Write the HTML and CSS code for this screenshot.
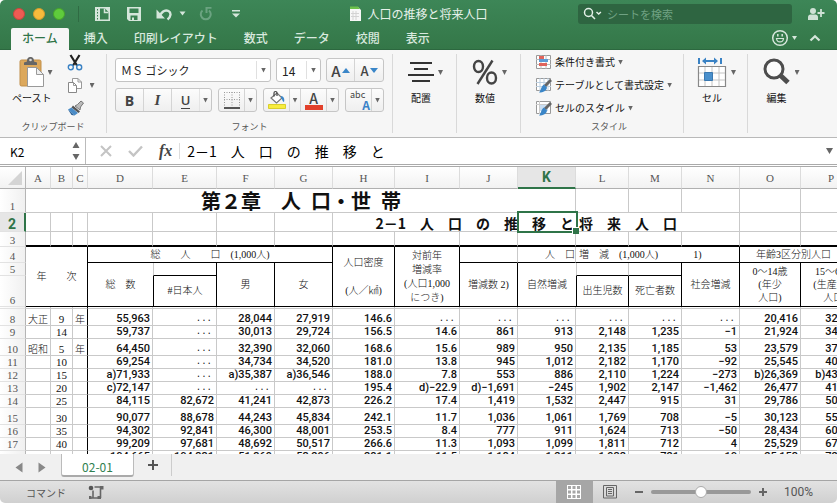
FILE: index.html
```html
<!DOCTYPE html>
<html lang="ja">
  <head>
    <meta charset="UTF-8" />
    <meta name="viewport" content="width=device-width, initial-scale=1.0" />
    <title>人口の推移と将来人口</title>
    <link rel="stylesheet" href="styles.css">
  </head>
  <body>
    <div class="window">
      <header class="top">
        <div class="titlebar">
          <div class="quick">
            <button class="light red" aria-label="閉じる"></button>
            <button class="light yellow" aria-label="しまう"></button>
            <button class="light green" aria-label="拡大"></button>
            <span class="quick-line"></span>
            <button class="q-btn q-book" aria-label="テンプレート">
              <svg width="17" height="16" viewBox="0 0 17 16"><path fill="#d5e6db" fill-rule="evenodd" d="M1 1h15v14H1zM6 2.500v11h8.500V6L11 2.500z"/><path d="M10.500 2.500V6.500H14.500" fill="none" stroke="#d5e6db" stroke-width="1.500"/><path d="M3.500 3v11" stroke="#3a7f52" stroke-dasharray="1.500 1.500"/></svg>
            </button>
            <button class="q-btn q-save" aria-label="保存">
              <svg width="16" height="16" viewBox="0 0 16 16"><path fill="#d5e6db" fill-rule="evenodd" d="M1 1h14v14H3L1 13zM3.500 2.500v4.500h9V2.500zM4.500 9.500V14h1.500v-2.500h2V14h3.500V9.500z"/></svg>
            </button>
            <button class="q-btn q-undo" aria-label="元に戻す">
              <svg width="16" height="16" viewBox="0 0 16 16"><path d="M3.500 10C6 5.500 9.500 3.500 12.500 5c3 1.700 2.500 6-1 8.500" fill="none" stroke="#d5e6db" stroke-width="2.400"/><path fill="#d5e6db" d="M0.500 3.500v9h8.500z"/></svg>
            </button>
            <svg class="q-caret" width="7" height="5" viewBox="0 0 7 5"><path fill="#d5e6db" d="M0.500 0.500h6L3.500 4.500z"/></svg>
            <button class="q-btn q-redo" aria-label="やり直し">
              <svg width="15" height="16" viewBox="0 0 15 16"><path d="M4.500 4.500a5 5 0 1 0 6.500 0" fill="none" stroke="#6ba381" stroke-width="2"/><path fill="#6ba381" d="M7.500 1h6v1.800h-4V7H7.500z"/></svg>
            </button>
            <button class="q-btn q-more" aria-label="カスタマイズ">
              <svg width="10" height="10" viewBox="0 0 10 10"><path fill="#d5e6db" d="M1 1h8v1.500H1zM1 4.500h8L5 8.500z"/></svg>
            </button>
          </div>
          <div class="doc-title">
            <svg width="13" height="16" viewBox="0 0 13 16"><path fill="#f7f7f7" d="M1 1h8l3 3v11H1z"/><path fill="#6cc24a" d="M1 0.500h8l2 2.500H1z"/><path d="M4 5v9M7 5v9M2 7.500h8M2 10.500h8" stroke="#d3d3d3"/></svg>
            <span>人口の推移と将来人口</span>
          </div>
          <div class="title-right">
            <label class="search">
              <svg width="19" height="13" viewBox="0 0 19 13"><circle cx="5.500" cy="5.500" r="4" fill="none" stroke="#e4f0e8" stroke-width="1.500"/><path d="M8.500 8.500l3.500 3.500M13.500 5l2.200 2 2.200-2" fill="none" stroke="#e4f0e8" stroke-width="1.500"/></svg>
              <input type="search" placeholder="シートを検索" aria-label="シートを検索" />
            </label>
            <button class="share" aria-label="共有">
              <svg width="18" height="14" viewBox="0 0 18 14"><circle cx="6" cy="4" r="3" fill="#cfe2d6"/><path fill="#cfe2d6" d="M1 13V10c0-2 2-2.500 3-2.500h4c1 0 3 .5 3 2.500v3z"/><path d="M14 2v8M10.500 6h7" stroke="#cfe2d6" stroke-width="1.800"/></svg>
            </button>
          </div>
        </div>
        <div class="tab-row">
          <nav class="tabs">
            <a class="tab active" href="#">ホーム</a>
            <a class="tab" href="#">挿入</a>
            <a class="tab" href="#">印刷レイアウト</a>
            <a class="tab" href="#">数式</a>
            <a class="tab" href="#">データ</a>
            <a class="tab" href="#">校閲</a>
            <a class="tab" href="#">表示</a>
          </nav>
          <div class="tab-tools">
            <button class="smile" aria-label="フィードバック">
              <svg width="27" height="18" viewBox="0 0 27 18"><circle cx="9" cy="9" r="7.300" fill="none" stroke="#d5e6db" stroke-width="1.500"/><path d="M5.500 9.500c.5 4.500 6.500 4.500 7 0z" fill="none" stroke="#d5e6db" stroke-width="1.200"/><path d="M6.800 5v2.500M11.200 5v2.500" stroke="#d5e6db" stroke-width="1.500"/><path fill="#d5e6db" d="M21 7h5l-2.500 4z"/></svg>
            </button>
            <button class="fold" aria-label="リボンを閉じる">
              <svg width="12" height="8" viewBox="0 0 12 8"><path d="M1.500 6.500L6 2.200l4.500 4.300" fill="none" stroke="#d5e6db" stroke-width="2.200"/></svg>
            </button>
          </div>
        </div>
      </header>

      <section class="ribbon">
        <div class="group clipboard">
          <div class="group-body">
            <button class="big">
              <svg width="26" height="32" viewBox="0 0 26 32"><rect x="1" y="4" width="21" height="26" rx="1.500" fill="#dca85c" stroke="#c18f49"/><path fill="#666" d="M5 9V6.500L8 5.500C8 2 9.500 1 11.500 1S15 2 15 5.500l3 1V9z"/><circle cx="11.500" cy="4" r="1.300" fill="#ddd"/><path fill="#fff" stroke="#999" d="M8.500 11.500h9l7 7v12h-16z"/><path fill="#eee" stroke="#999" d="M17.500 11.500v7h7z"/></svg>
              <span>ペースト</span>
            </button>
            <i class="caret"></i>
            <div class="clip-side">
              <button aria-label="カット">
                <svg width="16" height="17" viewBox="0 0 16 17"><path d="M3.500 1L10 11.500M12.500 1L6 11.500" stroke="#222" stroke-width="2.200"/><circle cx="3.800" cy="13.300" r="2.500" fill="none" stroke="#3a82c4" stroke-width="1.400"/><circle cx="12.200" cy="13.300" r="2.500" fill="none" stroke="#3a82c4" stroke-width="1.400"/></svg>
              </button>
              <button aria-label="コピー">
                <svg width="16" height="17" viewBox="0 0 16 17"><path fill="#fff" stroke="#999" d="M5.500 1.500H11L14.500 5v6.500h-9z"/><path fill="#fff" stroke="#888" d="M1.500 5.500h5L9.500 8.500v7h-8z"/><path d="M6.500 5.500v3h3M11 1.500V5h3.500" fill="none" stroke="#999"/></svg>
                <i class="caret"></i>
              </button>
              <button aria-label="書式のコピー">
                <svg width="18" height="16" viewBox="0 0 18 16"><path fill="#bbb" stroke="#777" d="M8 6l2.500-1.500L14 1l2.500 2-3 4-.5 3z"/><path fill="#555" d="M6 5.500l7 6-1.500 1.500-7-5.500z"/><path fill="#4a8cc7" d="M4.500 7.500l6.500 5.500-3.500 2.500L1 9.500z"/><path fill="#2b6299" d="M1 9.500l6.500 6-3-.5z"/></svg>
              </button>
            </div>
          </div>
          <div class="caption">クリップボード</div>
        </div>

        <div class="group font">
          <div class="font-rows">
            <div class="font-row">
              <div class="combo combo-name">
                <select aria-label="フォント名"><option>ＭＳ ゴシック</option></select>
                <i class="caret"></i>
              </div>
              <div class="combo combo-size">
                <select aria-label="フォントサイズ"><option>14</option></select>
                <i class="caret"></i>
              </div>
              <div class="btns">
                <button class="grow" aria-label="拡大">A<svg width="8" height="5" viewBox="0 0 8 5"><path fill="#3a86c8" d="M0 5h8L4 0z"/></svg></button>
                <button class="shrink" aria-label="縮小">A<svg width="8" height="5" viewBox="0 0 8 5"><path fill="#3a86c8" d="M0 0h8L4 5z"/></svg></button>
              </div>
            </div>
            <div class="font-row">
              <div class="btns">
                <button class="bold">B</button>
                <button class="italic">I</button>
                <button class="under"><span>U</span></button>
                <button class="drop" aria-label="下線の種類"><i class="caret"></i></button>
              </div>
              <div class="btns">
                <button class="tool" aria-label="罫線">
                  <svg width="18" height="18" viewBox="0 0 18 18"><path d="M1.500 1v15M9 1v15M16.500 1v15M1 1.500h16M1 8.500h16" stroke="#999" stroke-dasharray="1 1.500"/><path d="M1 17h16" stroke="#222" stroke-width="1.500"/></svg>
                </button>
                <button class="drop" aria-label="罫線の種類"><i class="caret"></i></button>
              </div>
              <div class="btns">
                <button class="tool" aria-label="塗りつぶし">
                  <svg width="20" height="20" viewBox="0 0 20 20"><path fill="#fff" stroke="#777" stroke-width="1.200" d="M4 8l6-5 5 5-5.500 5z"/><path d="M7 6.500V3c0-2 3-2 3 0v3" fill="none" stroke="#444" stroke-width="1.200"/><path fill="#3a86c8" d="M14 6c2.500 0 4 3 3 6-1.500 0-1.500-3-3-4z"/><path fill="#f7ec3e" stroke="#d9cf2c" d="M1.500 14.500h17v4h-17z"/></svg>
                </button>
                <button class="drop" aria-label="塗りつぶしの色"><i class="caret"></i></button>
                <button class="tool color-a" aria-label="フォントの色">A<span class="red-bar"></span></button>
                <button class="drop" aria-label="文字の色"><i class="caret"></i></button>
              </div>
              <div class="btns">
                <button class="tool phonetic"><span>abc</span><b>A</b></button>
                <button class="drop" aria-label="ふりがな"><i class="caret"></i></button>
              </div>
            </div>
          </div>
          <div class="caption">フォント</div>
        </div>

        <div class="group single">
          <button class="big">
            <svg width="26" height="32" viewBox="0 0 26 32"><path d="M2 7h22M6 13h14M0 19h26M4 25h18" stroke="#333" stroke-width="2"/></svg>
            <span>配置</span>
          </button>
          <i class="caret"></i>
        </div>
        <div class="group single">
          <button class="big">
            <svg width="26" height="32" viewBox="0 0 26 32"><ellipse cx="6.500" cy="10.500" rx="4.500" ry="5.500" fill="none" stroke="#444" stroke-width="2.400"/><ellipse cx="19.500" cy="22" rx="4.500" ry="5.500" fill="none" stroke="#444" stroke-width="2.400"/><path d="M20.500 4.500L5.500 28" stroke="#444" stroke-width="2.400"/></svg>
            <span>数値</span>
          </button>
          <i class="caret"></i>
        </div>

        <div class="group styles">
          <div class="style-list">
            <button>
              <svg width="17" height="16" viewBox="0 0 17 16"><path fill="#fff" stroke="#999" d="M1.500 1.500h14v13h-14z"/><path d="M1 5.500h15M1 10.500h15M6 1v14M11 1v14" stroke="#bbb"/><path fill="#e0645c" d="M4 2h5v3H4zM4 9h8v3H4z"/><path fill="#5b9bd5" d="M4 5h9v3H4z"/></svg>
              条件付き書式<i class="caret"></i>
            </button>
            <button>
              <svg width="17" height="16" viewBox="0 0 17 16"><path fill="#fff" stroke="#999" d="M1.500 1.500h14v12h-14z"/><path d="M1 5.500h15M1 9.500h15M5 1v13M9 1v13M13 1v13" stroke="#bcd0e2"/><path d="M16 3l-6 6" stroke="#666" stroke-width="3"/><path fill="#3a86c8" d="M9 7.500l3 3c-.5 3.500-3.500 5-8 5C6 14 6 9 9 7.500z"/></svg>
              テーブルとして書式設定<i class="caret"></i>
            </button>
            <button>
              <svg width="17" height="16" viewBox="0 0 17 16"><path fill="#fff" stroke="#999" d="M1.500 1.500h14v12h-14z"/><path d="M1 4.500h15M4.500 1v13" stroke="#ccc"/><path fill="#c9def2" d="M5 5h8v6H5z"/><path d="M16 3l-6 6" stroke="#666" stroke-width="3"/><path fill="#3a86c8" d="M9 7.500l3 3c-.5 3.500-3.500 5-8 5C6 14 6 9 9 7.500z"/></svg>
              セルのスタイル<i class="caret"></i>
            </button>
          </div>
          <div class="caption">スタイル</div>
        </div>

        <div class="group single">
          <button class="big">
            <svg width="30" height="32" viewBox="0 0 30 32"><path fill="#fff" stroke="#888" stroke-width="1.200" d="M1.500 10.500h27v20h-27z"/><path d="M2 17h26M2 24h26M8 11v19M15 11v19M22 11v19" stroke="#c4c4c4"/><path fill="#4a90cc" stroke="#3a78b0" d="M7.500 16.500h8v8h-8z"/><path fill="#3a82c4" d="M1 2h2v6H1zM23 2h2v6h-2zM5 5l4-3.500v2.500h8V1.500L21 5l-4 3.500V6H9v2.500z"/></svg>
            <span>セル</span>
          </button>
          <i class="caret"></i>
        </div>
        <div class="group single last">
          <button class="big">
            <svg width="28" height="32" viewBox="0 0 28 32"><circle cx="11" cy="13" r="9" fill="#fbfbfb" stroke="#4d4d4d" stroke-width="3"/><path d="M17.500 19.500l7.500 7" stroke="#4d4d4d" stroke-width="5"/></svg>
            <span>編集</span>
          </button>
          <i class="caret"></i>
        </div>
      </section>

      <section class="formula-bar">
        <div class="name-box">
          <input type="text" value="K2" aria-label="名前ボックス" />
          <svg width="8" height="20" viewBox="0 0 8 20"><path fill="#666" d="M0.500 7h7L4 1zM0.500 13h7L4 19z"/></svg>
        </div>
        <div class="formula-tools">
          <button aria-label="キャンセル"><svg width="12" height="12" viewBox="0 0 12 12"><path d="M1 1l10 10M11 1L1 11" stroke="#c4c4c4" stroke-width="2"/></svg></button>
          <button aria-label="入力"><svg width="15" height="12" viewBox="0 0 15 12"><path d="M1 6l4.500 4.500L14 1.500" fill="none" stroke="#c4c4c4" stroke-width="2.400"/></svg></button>
          <button class="fx">fx</button>
        </div>
        <input class="formula" type="text" value="2－1　人　口　の　推　移　と" aria-label="数式バー" />
        <i class="caret"></i>
      </section>

      <main class="sheet">
        <table>
          <colgroup>
            <col class="w-head"><col class="w-a"><col class="w-b"><col class="w-c"><col class="w-d"><col class="w-e">
            <col class="w-m"><col class="w-m"><col class="w-h"><col class="w-d"><col class="w-m"><col class="w-m">
            <col class="w-s"><col class="w-s"><col class="w-m"><col class="w-o"><col class="w-o">
          </colgroup>
          <thead>
            <tr class="letters">
              <th class="corner"><svg width="16" height="16" viewBox="0 0 16 16"><path fill="#d4d4d4" d="M15 1v14H1z"/></svg></th>
              <th>A</th><th>B</th><th>C</th><th>D</th><th>E</th><th>F</th><th>G</th><th>H</th><th>I</th><th>J</th>
              <th class="sel">K</th><th>L</th><th>M</th><th>N</th><th>O</th><th>P</th>
            </tr>
          </thead>
          <tbody>
            <tr class="row-1">
              <th>1</th>
              <td class="chapter" colspan="11">第２章　人&ensp;口・世&ensp;帯</td>
              <td></td><td></td><td></td><td></td><td></td>
            </tr>
            <tr class="row-2">
              <th class="sel">2</th>
              <td></td><td></td><td></td><td></td><td></td><td></td><td></td>
              <td class="section-left" colspan="4">2－1　人　口　の　推　移　と<span class="selection"></span></td>
              <td class="section-right" colspan="3">将　来　人　口</td>
              <td></td><td></td>
            </tr>
            <tr class="row-3">
              <th>3</th>
              <td></td><td></td><td></td><td></td><td></td><td></td><td></td><td></td><td></td><td></td><td></td><td></td><td></td><td></td><td></td><td></td>
            </tr>
            <tr class="row-4 labels">
              <th>4</th>
              <td class="kr kb" colspan="3" rowspan="3">年　　次</td>
              <td class="kr kb" colspan="4">総　　人　　口　(1,000人)</td>
              <td class="kr kb" rowspan="3">人口密度<br><br>(人／㎢)</td>
              <td class="kr kb" rowspan="3">対前年<br>増減率<br>(人口1,000<br>につき)</td>
              <td class="kb"></td>
              <td class="kb right">人　口</td>
              <td class="kr kb left" colspan="3">増　減　(1,000人)　　　&ensp;1)</td>
              <td class="kb ages" colspan="2">年齢3区分別人口</td>
            </tr>
            <tr class="row-5 labels">
              <th>5</th>
              <td class="kb no-r" rowspan="2">総　数</td>
              <td class="kr kb gl"></td>
              <td class="kr kb" rowspan="2">男</td>
              <td class="kr kb" rowspan="2">女</td>
              <td class="kr kb" rowspan="2">増減数 2)</td>
              <td class="kb no-r" rowspan="2">自然増減</td>
              <td class="kb gl"></td>
              <td class="kr kb"></td>
              <td class="kr kb" rowspan="2">社会増減</td>
              <td class="kr kb" rowspan="2">0～14歳<br>(年少　<br>人口)</td>
              <td class="kr kb working" rowspan="2">15～64歳<br>(生産年齢<br>人口)</td>
            </tr>
            <tr class="row-6 labels">
              <th>6</th>
              <td class="kr kb kl">#日本人</td>
              <td class="kr kb kl">出生児数</td>
              <td class="kr kb">死亡者数</td>
            </tr>
            <tr class="row-7">
              <th></th>
              <td></td><td></td><td class="kr"></td><td></td><td></td><td></td><td></td><td></td><td></td><td></td><td></td><td></td><td></td><td></td><td></td><td></td>
            </tr>
          </tbody>
          <tbody id="dataRows"></tbody>
        </table>
      </main>

      <footer>
        <div class="sheet-tabs">
          <button class="prev" aria-label="前のシート"><svg width="8" height="11" viewBox="0 0 8 11"><path fill="#888" d="M7.500 0.500v10L0.500 5.500z"/></svg></button>
          <button class="next" aria-label="次のシート"><svg width="8" height="11" viewBox="0 0 8 11"><path fill="#888" d="M0.500 0.500v10L7.500 5.500z"/></svg></button>
          <a class="sheet-tab" href="#">02-01</a>
          <button class="add" aria-label="シートを追加"><svg width="12" height="12" viewBox="0 0 12 12"><path d="M6 1v10M1 6h10" stroke="#555" stroke-width="2"/></svg></button>
        </div>
        <div class="status">
          <span class="mode">コマンド</span>
          <button class="macro" aria-label="マクロの記録">
            <svg width="17" height="15" viewBox="0 0 17 15"><circle cx="3" cy="3" r="2.300" fill="#555"/><path d="M6.500 2H15M5 5.500V12.500M1 13h10.500M12.500 2v11" fill="none" stroke="#666" stroke-width="1.600"/><path fill="#666" d="M12 1h3.500v3.500H12zM1 11h2.500v3H1zM9.500 11H13v3H9.500z"/></svg>
          </button>
          <div class="status-right">
            <button class="view on" aria-label="標準">
              <svg width="14" height="14" viewBox="0 0 14 14"><path fill="#fff" d="M0 0h14v14H0z"/><path fill="#a6a6a6" d="M1 1h3v3H1zM5.500 1h3v3h-3zM10 1h3v3h-3zM1 5.500h3v3H1zM5.500 5.500h3v3h-3zM10 5.500h3v3h-3zM1 10h3v3H1zM5.500 10h3v3h-3zM10 10h3v3h-3z"/></svg>
            </button>
            <button class="view" aria-label="ページレイアウト">
              <svg width="14" height="14" viewBox="0 0 14 14"><path fill="none" stroke="#666" d="M.5.5h13v12.500H.5zM3.500 2.500h7v8.500h-7z"/><path d="M5 4.500h4M5 6.500h4M5 8.500h4" stroke="#666"/></svg>
            </button>
            <button class="zoom-btn" aria-label="縮小"><svg width="10" height="10" viewBox="0 0 10 10"><path d="M1 5h8" stroke="#666" stroke-width="2"/></svg></button>
            <input class="zoom" type="range" min="0" max="200" value="100" aria-label="ズーム" />
            <button class="zoom-btn" aria-label="拡大"><svg width="10" height="10" viewBox="0 0 10 10"><path d="M1 5h8M5 1v8" stroke="#666" stroke-width="2"/></svg></button>
            <span class="percent">100%</span>
          </div>
        </div>
      </footer>
    </div>
    <script src="script.js"></script>
  </body>
</html>
```

FILE: styles.css
```css
* {
  box-sizing: border-box;
}
body {
  margin: 0;
  background: #fff;
  font-family: "Noto Sans CJK JP", sans-serif;
  font-size: 10px;
  color: #111;
}
button {
  font-family: inherit;
  font-size: inherit;
  color: inherit;
  background: none;
  border: none;
  padding: 0;
}
input,
select {
  font-family: inherit;
  border: none;
  outline: none;
  background: none;
  padding: 0;
  margin: 0;
}
svg {
  display: block;
  flex: none;
}
.window {
  display: flex;
  flex-direction: column;
  height: 100vh;
  overflow: hidden;
  border-radius: 5px;
}
.caret {
  flex: none;
  width: 5px;
  height: 5px;
  background: #666;
  clip-path: polygon(0 0, 100% 0, 50% 100%);
}

/* title bar */
.top {
  background: linear-gradient(#3d8657, #347748);
  border-bottom: 1px solid #2c683f;
}
.titlebar {
  display: grid;
  grid-template-columns: 1fr auto 1fr;
  height: 27px;
  align-items: center;
}
.quick {
  display: flex;
  align-items: center;
  padding-left: 13px;
}
.light {
  width: 12px;
  height: 12px;
  border-radius: 50%;
  margin-right: 8px;
}
.light.red {
  background: #ee5b53;
  border: 1px solid #c9453d;
}
.light.yellow {
  background: #f7bb3c;
  border: 1px solid #d49b2c;
}
.light.green {
  background: #5fcb3c;
  border: 1px solid #47a42b;
}
.quick-line {
  width: 1px;
  height: 16px;
  margin-left: 5px;
  background: #2f6b43;
}
.q-book {
  margin-left: 15px;
}
.q-save {
  margin-left: 15px;
}
.q-undo {
  margin-left: 14px;
}
.q-caret {
  margin-left: 7px;
}
.q-redo {
  margin-left: 12px;
}
.q-more {
  margin-left: 18px;
}
.doc-title {
  display: flex;
  align-items: center;
  gap: 5px;
  font-size: 12px;
  color: #e6f1ea;
}
.title-right {
  display: flex;
  align-items: center;
  justify-content: flex-end;
  padding-right: 12px;
}
.search {
  display: flex;
  align-items: center;
  flex: 0 1 214px;
  min-width: 0;
  height: 20px;
  padding-left: 5px;
  gap: 5px;
  border-radius: 3px;
  background: #2e6541;
}
.search input {
  width: 100%;
  min-width: 0;
  font-size: 11px;
  color: #fff;
}
.search input::placeholder {
  color: #70a283;
}
.share {
  margin-left: 15px;
}
.tab-row {
  display: flex;
  justify-content: space-between;
  height: 22px;
}
.tabs {
  display: flex;
  padding: 1px 0 0 11px;
  margin-bottom: -1px;
}
.tab {
  padding: 0 13px;
  font-size: 12px;
  font-weight: 500;
  line-height: 20px;
  color: #d9e9df;
  text-decoration: none;
}
.tab.active {
  padding: 0 11px;
  margin-right: 2px;
  color: #2f7448;
  background: #f6f6f6;
  border-radius: 2px 2px 0 0;
}
.tab-tools {
  display: flex;
  align-items: center;
  gap: 11px;
  padding-right: 16px;
}

/* ribbon */
.ribbon {
  display: flex;
  flex: none;
  padding: 4px 0;
  background: #f6f6f6;
  border-bottom: 1px solid #b9b9b9;
}
.group {
  display: flex;
  flex-direction: column;
  justify-content: space-between;
  flex: none;
  height: 79px;
  border-right: 1px solid #d9d9d9;
}
.group.last {
  border-right: none;
}
.caption {
  font-size: 9px;
  line-height: 12px;
  text-align: center;
  color: #555;
}
.group-body {
  display: flex;
  align-items: flex-start;
  padding-left: 12px;
}
.big {
  display: flex;
  flex-direction: column;
  align-items: center;
  gap: 3px;
  padding-top: 2px;
  line-height: 14px;
}
.group-body .caret {
  margin: 16px 0 0 -4px;
}
.clipboard {
  width: 107px;
}
.clip-side {
  display: flex;
  flex-direction: column;
  gap: 6px;
  padding-left: 14px;
}
.clip-side button {
  display: flex;
}
.clip-side .caret {
  margin: 6px 0 0 7px;
}
.font {
  width: 286px;
  padding: 0 8px;
}
.font-rows {
  display: flex;
  flex-direction: column;
  gap: 6px;
  padding-top: 4px;
}
.font-row {
  display: flex;
  justify-content: space-between;
}
.combo {
  display: flex;
  align-items: center;
  height: 24px;
  padding: 0 4px 0 5px;
  border: 1px solid #c3c3c3;
  border-radius: 3px;
  background: #fff;
}
.combo select {
  flex: 1;
  height: 18px;
  margin-right: 4px;
  appearance: none;
  font-size: 12px;
  color: #222;
  border-right: 1px solid #e0e0e0;
}
.combo-name {
  width: 156px;
}
.combo-name select {
  font-size: 11px;
}
.combo-size {
  width: 45px;
}
.btns {
  display: flex;
  height: 24px;
  border: 1px solid #c6c6c6;
  border-radius: 3px;
  background: linear-gradient(#fcfcfc, #efefef);
}
.btns button {
  display: flex;
  align-items: center;
  justify-content: center;
  width: 28px;
  border-right: 1px solid #d4d4d4;
  color: #444;
}
.btns button:last-child {
  border-right: none;
}
.btns .drop {
  width: 11px;
}
.btns .tool {
  width: 26px;
}
.btns .grow {
  font-size: 15px;
  font-weight: 500;
  gap: 1px;
}
.btns .shrink {
  font-size: 13px;
  font-weight: 500;
  gap: 1px;
}
.btns .bold {
  font: bold 14px "Open Sans", sans-serif;
}
.btns .italic {
  font: italic bold 15px "Liberation Serif", serif;
}
.btns .under {
  border-right-color: #e4e4e4;
  font: 600 13px "Open Sans", sans-serif;
}
.under span {
  line-height: 16px;
  border-bottom: 1px solid #444;
}
.btns .color-a {
  flex-direction: column;
  font-size: 14px;
  font-weight: 500;
  line-height: 14px;
}
.red-bar {
  width: 18px;
  height: 5px;
  background: #e2402b;
}
.btns .phonetic {
  display: block;
  padding: 0 1px 0 4px;
  text-align: left;
  font-size: 9px;
  line-height: 10px;
}
.phonetic span,
.phonetic b {
  display: block;
}
.phonetic b {
  text-align: right;
  font-size: 12px;
  color: #3a82c8;
}
.single {
  flex-direction: row;
  justify-content: center;
  width: 64px;
  gap: 4px;
  padding-left: 2px;
}
.single .caret {
  margin-top: 16px;
}
.styles {
  width: 163px;
  padding-left: 14px;
}
.style-list {
  display: flex;
  flex-direction: column;
  gap: 7px;
}
.style-list button {
  display: flex;
  align-items: center;
  gap: 3px;
  line-height: 16px;
  white-space: nowrap;
}

/* formula bar */
.formula-bar {
  display: flex;
  align-items: center;
  flex: none;
  height: 29px;
  padding-right: 4px;
  background: #fff;
  border-bottom: 3px double #aaa;
}
.name-box {
  display: flex;
  align-items: center;
  justify-content: space-between;
  align-self: stretch;
  width: 86px;
  padding: 0 5px 0 10px;
  border-right: 1px solid #bbb;
}
.name-box input {
  width: 50px;
  font-size: 12px;
}
.formula-tools {
  display: flex;
  align-items: center;
  gap: 16px;
  height: 16px;
  padding: 0 7px 0 14px;
  border-right: 1px solid #ddd;
}
.fx {
  font: italic bold 16px "Liberation Serif", serif;
  color: #444;
}
.formula {
  flex: 1;
  min-width: 0;
  padding-left: 7px;
  font-size: 14px;
}
.formula-bar > .caret {
  width: 7px;
  height: 6px;
}

/* sheet */
.sheet {
  flex: 1;
  min-height: 0;
  overflow: hidden;
  background: #fff;
}
table {
  table-layout: fixed;
  width: 862px;
  border-spacing: 0;
}
.w-head { width: 26px; }
.w-a { width: 25px; }
.w-b { width: 22px; }
.w-c { width: 15px; }
.w-d { width: 65px; }
.w-e { width: 64px; }
.w-m { width: 58px; }
.w-h { width: 62px; }
.w-s { width: 53px; }
.w-o { width: 61px; }
td,
th {
  height: 13px;
  padding: 0;
  border-right: 1px solid #c9c9c9;
  border-bottom: 1px solid #c9c9c9;
  line-height: 12px;
  white-space: nowrap;
  vertical-align: bottom;
}
th {
  font: 11px/12px "Liberation Serif", serif;
  color: #555;
  background: linear-gradient(90deg, #fff, #f0f0f0);
  border-right-color: #b5b5b5;
  border-bottom-color: #e2e2e2;
}
.letters th {
  height: 22px;
  vertical-align: middle;
  background: linear-gradient(#fff, #f2f2f2);
  border-right-color: #dcdcdc;
  border-bottom-color: #b0b0b0;
}
.letters .corner {
  border-right-color: #b5b5b5;
}
.corner svg {
  margin-left: 7px;
}
.letters .sel,
th.sel {
  font: bold 14px/14px Roboto, sans-serif;
  color: #2f7448;
  background: #e6e6e6;
}
.letters .sel {
  border-bottom: 2px solid #2f7448;
}
th.sel {
  border-right: 2px solid #2f7448;
}
.letters th.sel {
  border-right: 1px solid #dcdcdc;
}
.row-1 > * {
  height: 24px;
}
.row-1 .chapter {
  padding-left: 175px;
  font-size: 20px;
  font-weight: bold;
  line-height: 22px;
}
.row-2 > * {
  height: 19px;
}
.section-left,
.section-right {
  font-size: 14px;
  font-weight: bold;
  line-height: 16px;
}
.section-left {
  position: relative;
  padding-right: 2px;
  text-align: right;
  border-right: none;
}
.section-right {
  padding-left: 3px;
}
/* frame round the current cell, with its fill handle */
.selection {
  position: absolute;
  right: -2px;
  top: -2px;
  bottom: -2px;
  width: 61px;
  border: 2px solid #2f7448;
}
.selection::after {
  content: "";
  position: absolute;
  right: -3px;
  bottom: -3px;
  width: 6px;
  height: 6px;
  background: #2f7448;
  border: 1px solid #fff;
  border-width: 1px 0 0 1px;
}
.row-3 > * {
  height: 15px;
}
.row-3 td {
  border-bottom: 2px solid #000;
}
.row-4 > * {
  height: 16px;
}
.row-6 > * {
  height: 31px;
}
.row-7 > * {
  height: 2px;
}
.labels td {
  font-family: "Liberation Serif", "Noto Sans CJK JP", serif;
  font-weight: 300;
  line-height: 14px;
  text-align: center;
  vertical-align: middle;
}
.row-5 td {
  line-height: 13px;
}
.labels .right {
  text-align: right;
}
.labels .left {
  padding-left: 3px;
  text-align: left;
}
.labels .ages {
  padding-left: 16px;
  text-align: left;
}
.labels .working {
  padding-left: 8px;
}
td.kr {
  border-right-color: #000;
}
td.kb {
  border-bottom-color: #000;
}
td.kl {
  border-left: 1px solid #000;
}
td.gl {
  border-left: 1px solid #c9c9c9;
}
td.no-r {
  border-right: none;
}
.num {
  padding-right: 2px;
  font: 500 11px/12px Roboto, sans-serif;
  text-align: right;
}
.na {
  padding-right: 4px;
  font: 9px/12px "Liberation Mono", monospace;
  text-align: right;
}
.era {
  font-weight: 300;
  text-align: center;
}
.year {
  font: 11px/12px "Liberation Serif", serif;
  text-align: center;
}
.tall > * {
  height: 17px;
}

/* footer */
footer {
  flex: none;
}
.sheet-tabs {
  display: flex;
  height: 26px;
  padding-left: 15px;
  background: #f0f0f0;
}
.next {
  margin: 0 15px;
}
.sheet-tab {
  width: 73px;
  height: 23px;
  background: #fff;
  border: 1px solid #bbb;
  border-top: none;
  border-bottom: 2px solid #aaa;
  border-radius: 0 0 3px 3px;
  font-size: 12px;
  line-height: 26px;
  text-align: center;
  color: #2f7f50;
  text-decoration: none;
}
.add {
  height: 22px;
  padding: 0 12px 0 13px;
  border-right: 1px solid #ccc;
}
.status {
  display: flex;
  align-items: center;
  height: 23px;
  padding-left: 26px;
  background: linear-gradient(#e2e2e2, #d0d0d0);
  border-top: 1px solid #a5a5a5;
  color: #555;
}
.macro {
  margin-left: 22px;
}
.status-right {
  display: flex;
  align-items: center;
  align-self: stretch;
  margin-left: auto;
  padding-right: 24px;
}
.view {
  display: flex;
  align-items: center;
  justify-content: center;
  align-self: stretch;
  width: 34px;
}
.view.on {
  width: 37px;
  background: #a6a6a6;
}
.zoom-btn {
  margin: 0 7px;
}
.zoom {
  width: 100px;
  height: 12px;
  appearance: none;
}
.zoom::-webkit-slider-runnable-track {
  height: 4px;
  border-radius: 2px;
  background: #999;
}
.zoom::-webkit-slider-thumb {
  appearance: none;
  width: 12px;
  height: 12px;
  margin-top: -4px;
  border: 1px solid #aaa;
  border-radius: 50%;
  background: #fff;
}
.percent {
  padding-left: 9px;
  font: 12px Roboto, sans-serif;
}
```

FILE: script.js
```js
// row number, era, year, suffix, then columns D to P
const rows = [
  ["8", "大正", "9", "年", "55,963", "...", "28,044", "27,919", "146.6", "...", "...", "...", "...", "...", "...", "20,416", "32,605"],
  ["9", "", "14", "", "59,737", "...", "30,013", "29,724", "156.5", "14.6", "861", "913", "2,148", "1,235", "−1", "21,924", "34,792"],
  ["10", "昭和", "5", "年", "64,450", "...", "32,390", "32,060", "168.6", "15.6", "989", "950", "2,135", "1,185", "53", "23,579", "37,807"],
  ["11", "", "10", "", "69,254", "...", "34,734", "34,520", "181.0", "13.8", "945", "1,012", "2,182", "1,170", "−92", "25,545", "40,484"],
  ["12", "", "15", "", "a)71,933", "...", "a)35,387", "a)36,546", "188.0", "7.8", "553", "886", "2,110", "1,224", "−273", "b)26,369", "b)43,252"],
  ["13", "", "20", "", "c)72,147", "...", "...", "...", "195.4", "d)−22.9", "d)−1,691", "−245", "1,902", "2,147", "−1,462", "26,477", "41,821"],
  ["14", "", "25", "", "84,115", "82,672", "41,241", "42,873", "226.2", "17.4", "1,419", "1,532", "2,447", "915", "31", "29,786", "50,168"],
  ["15", "", "30", "", "90,077", "88,678", "44,243", "45,834", "242.1", "11.7", "1,036", "1,061", "1,769", "708", "−5", "30,123", "55,167"],
  ["16", "", "35", "", "94,302", "92,841", "46,300", "48,001", "253.5", "8.4", "777", "911", "1,624", "713", "−50", "28,434", "60,469"],
  ["17", "", "40", "", "99,209", "97,681", "48,692", "50,517", "266.6", "11.3", "1,093", "1,099", "1,811", "712", "4", "25,529", "67,444"],
  ["18", "", "45", "", "104,665", "104,331", "51,369", "53,296", "281.1", "11.5", "1,184", "1,211", "1,932", "721", "10", "25,153", "72,119"],
];
const tallRows = ["8", "10", "15"];

const tbody = document.getElementById("dataRows");
rows.forEach((cells) => {
  const tr = document.createElement("tr");
  if (tallRows.includes(cells[0])) tr.className = "tall";
  cells.forEach((text, i) => {
    const cell = document.createElement(i === 0 ? "th" : "td");
    cell.textContent = text;
    if (i === 1) cell.className = "era";
    if (i === 2) cell.className = "year";
    if (i === 3) cell.className = "era kr";
    if (i > 3) cell.className = text === "..." ? "na" : "num";
    tr.appendChild(cell);
  });
  tbody.appendChild(tr);
});
```
